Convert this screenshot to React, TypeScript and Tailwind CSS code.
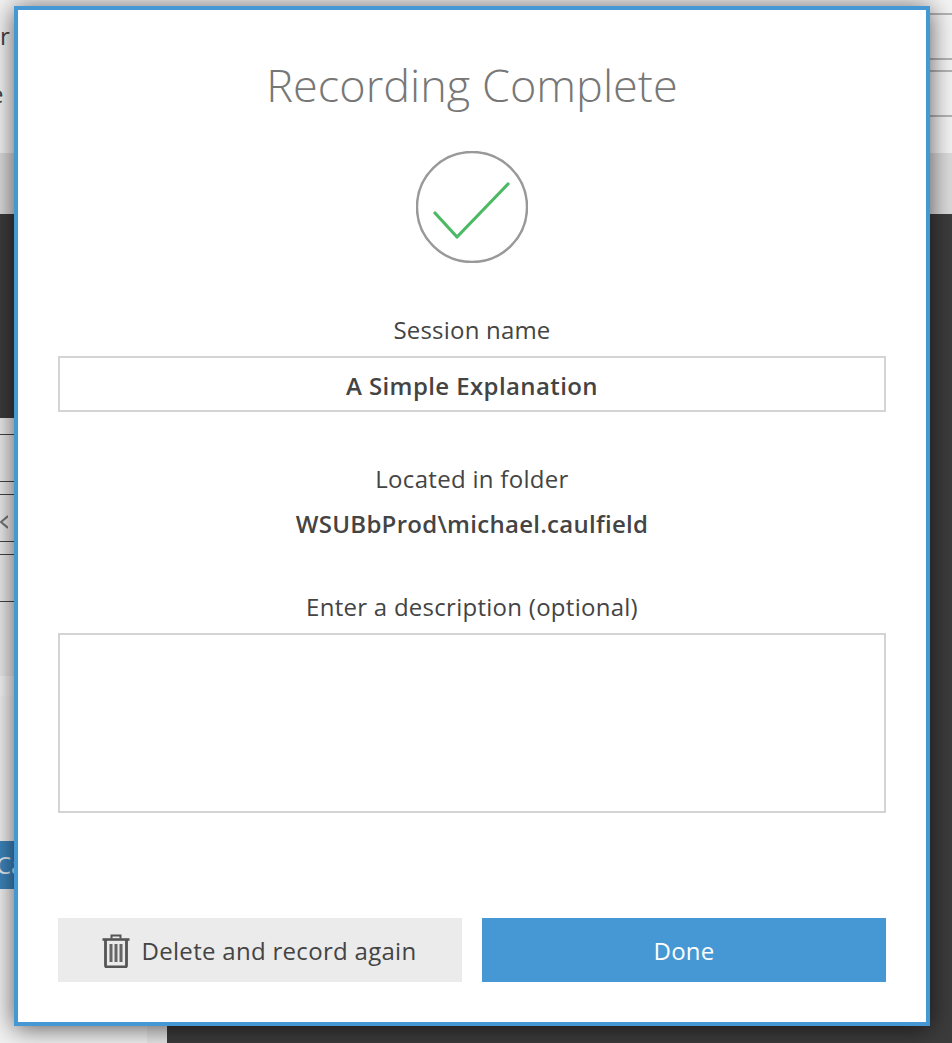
const font = "font-['Open_Sans','Noto_Sans',sans-serif]";

function BackgroundPage() {
  return (
    <div className={`flex h-[1043px] w-[952px] flex-col overflow-hidden bg-[#3c3c3c] ${font}`}>
      <header className="relative flex h-[153px] flex-col bg-[#f4f4f4] text-[24px] leading-none text-[#444]">
        <span className="h-[60px] pt-[24px]">r</span>
        <span className="ml-[-10px] mt-[22px]">e</span>
        <div className="absolute right-0 top-[13px] h-[47px] w-[100px] border-b-2 border-t-2 border-[#b4b4b4]" />
        <div className="absolute right-0 top-[70px] h-[47px] w-[100px] border-b-2 border-t-2 border-[#b4b4b4]" />
      </header>
      <div className="h-[61px] bg-[#dcdcdc]" />
      <div className="h-[204px] bg-[#3c3c3c]" />
      <div className="flex flex-1">
        <aside className="flex w-[147px] flex-col bg-[#f2f2f2]">
          <div className="h-[258px] bg-[#ececec] pt-[16px]">
            <div className="h-[48px] border-y border-[#444]" />
            <div className="mt-[12px] flex h-[48px] items-center border-y border-[#444] pt-[8px] text-[#777]">
              <svg width="8" height="14" viewBox="0 0 8 14" fill="none" stroke="currentColor" strokeWidth="2.200">
                <path d="M8 1 1 7l7 6" />
              </svg>
            </div>
            <div className="mt-[12px] h-[48px] border-y border-[#444]" />
          </div>
          <div className="h-[20px] bg-[#f6f6f6]" />
          <div className="mt-[145px] flex h-[48px] items-center bg-[#3d86bd] text-[24px] text-[#e4eef5]">
            <span className="ml-[-4px]">Ca</span>
          </div>
        </aside>
        <div className="w-[20px] bg-[#e8e8e8]" />
        <div className="flex-1 bg-[#3c3c3c]" />
      </div>
    </div>
  );
}

function TrashIcon() {
  return (
    <svg width="28" height="34" viewBox="0 0 28 34" fill="none" stroke="#555" strokeWidth="2">
      <path d="M9.500 4.500V1.500h9v3" />
      <path d="M0.500 5.500h27" strokeWidth="2.600" />
      <path d="M3.500 5.500v26c0 1 .6 1.500 1.500 1.500h18c.9 0 1.500-.5 1.500-1.500v-26" strokeWidth="2.800" />
      <path d="M9 10v18M14 10v18M19 10v18" strokeWidth="3" stroke="#666" />
    </svg>
  );
}

function RecordingCompleteDialog() {
  return (
    <div className={`absolute left-[14px] top-[6px] flex h-[1020px] w-[916px] flex-col border-4 border-[#4598d3] bg-white px-[40px] text-[#444] shadow-[0_2px_24px_rgba(0,0,0,0.65)] ${font}`}>
      <h1 className="mt-[43px] text-center text-[45px] font-light leading-[64px] tracking-[0.03px] text-[#777]">Recording Complete</h1>
      <div className="mt-[34px] flex justify-center">
        <svg width="112" height="112" viewBox="0 0 112 112" fill="none">
          <circle cx="56" cy="56" r="55" stroke="#999" strokeWidth="2.500" />
          <path d="M19 62 41 86 92 33" stroke="#4cb965" strokeWidth="3.200" strokeLinecap="round" strokeLinejoin="round" />
        </svg>
      </div>
      <div className="mt-[51px] text-center text-[24px] leading-[32px] tracking-[0.2px]">Session name</div>
      <input
        readOnly
        value="A Simple Explanation"
        className="mt-[10px] h-[56px] w-full border-2 border-[#d4d4d4] bg-white pt-[2px] text-center text-[24px] font-semibold tracking-[0.4px] text-[#444] outline-none"
      />
      <div className="mt-[51px] text-center text-[24px] leading-[32px] tracking-[0.3px]">Located in folder</div>
      <div className="mt-[13px] text-center text-[24px] font-semibold leading-[32px] tracking-[0.28px]">WSUBbProd\michael.caulfield</div>
      <div className="mt-[51px] text-center text-[24px] leading-[32px] tracking-[0.27px]">Enter a description (optional)</div>
      <textarea readOnly className="mt-[10px] h-[180px] w-full resize-none border-2 border-[#d4d4d4] bg-white outline-none" />
      <div className="mt-[105px] grid grid-cols-2 gap-[20px]">
        <button type="button" className="flex h-[64px] items-center justify-center gap-[11px] bg-[#ebebeb] pr-[2px] pt-[1px] text-[24px] tracking-[0.3px] text-[#444]">
          <span className="mr-[1px]">
            <TrashIcon />
          </span>
          Delete and record again
        </button>
        <button type="button" className="h-[64px] bg-[#4598d3] pt-[1px] text-[24px] tracking-[0.25px] text-white">
          Done
        </button>
      </div>
    </div>
  );
}

export default function App() {
  return (
    <div className="relative h-[1043px] w-[952px] overflow-hidden">
      <BackgroundPage />
      <RecordingCompleteDialog />
    </div>
  );
}
